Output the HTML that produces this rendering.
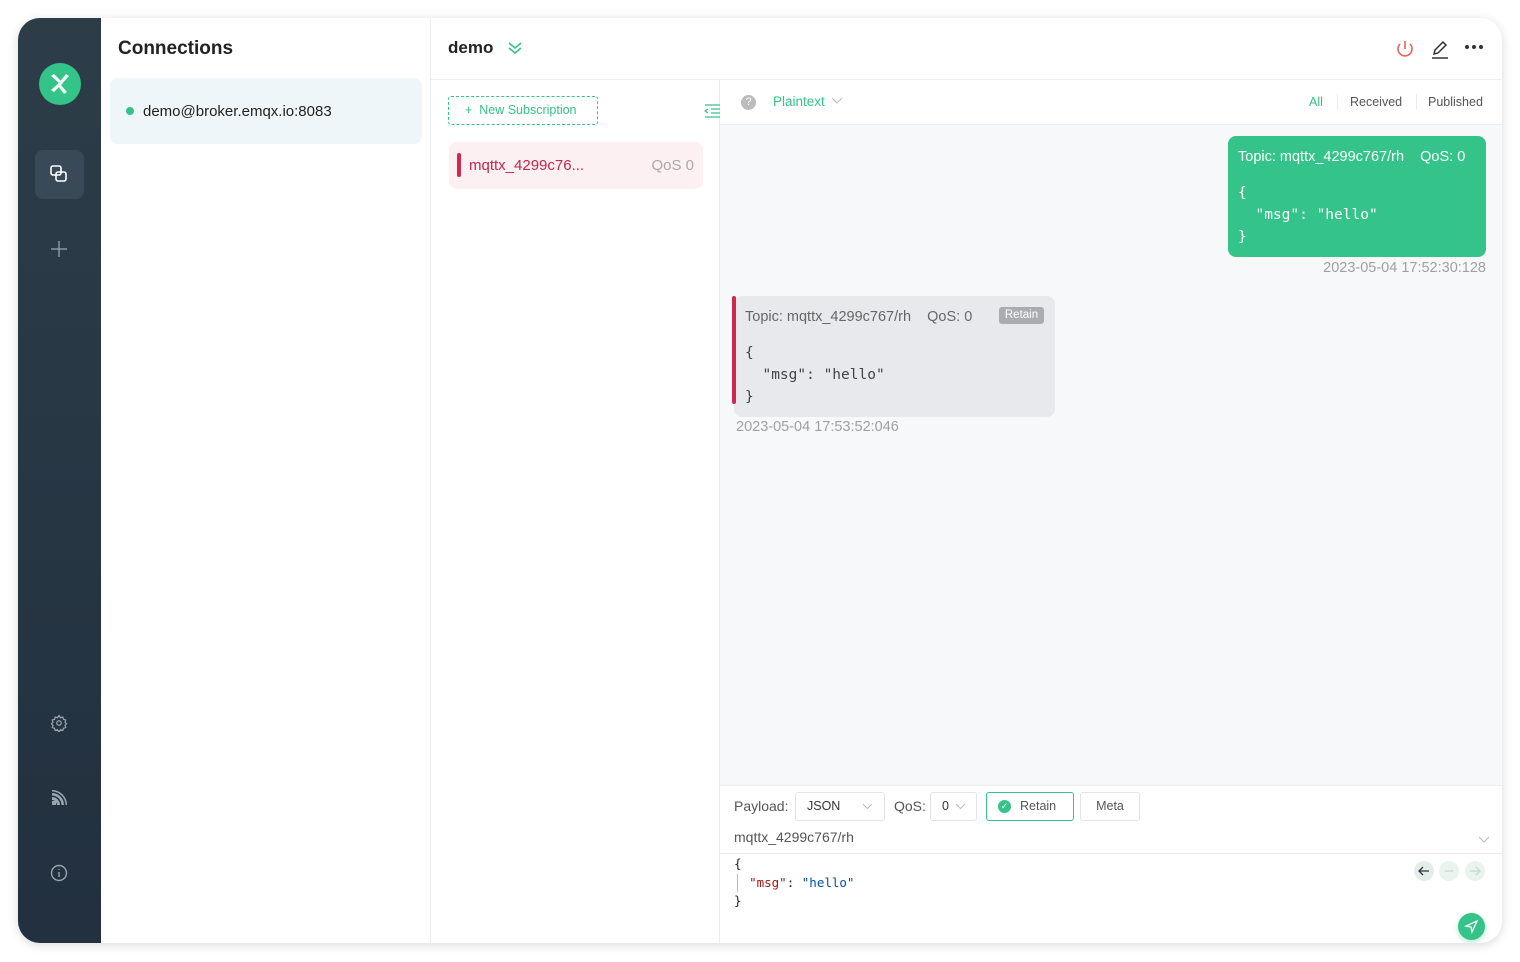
<!DOCTYPE html>
<html><head><meta charset="utf-8"><style>
*{box-sizing:border-box;margin:0;padding:0}
body{width:1520px;height:962px;background:#fff;font-family:"Liberation Sans",sans-serif;position:relative;overflow:hidden;color:#333}
.win{position:absolute;left:18px;top:18px;width:1484px;height:925px;border-radius:22px;overflow:hidden;background:#fff;box-shadow:0 2px 10px rgba(0,0,0,.15)}
.abs{position:absolute}
.side{left:0;top:0;width:83px;height:925px;background:linear-gradient(#2c3d48,#22303f)}
.mono{font-family:"DejaVu Sans Mono","Liberation Mono",monospace}
</style></head><body>
<div class="win">
 <div class="abs side">
  <div class="abs" style="left:21px;top:45px;width:42px;height:42px;border-radius:50%;background:#34c388">
   <svg width="42" height="42" viewBox="0 0 42 42"><path d="M12 13 L20 20 L12 27 L15 29 L24 20 L15 11Z" fill="#fff"/><path d="M30 13 L22 22 L28 29 L25 31 L18 22 L27 11Z" fill="#e8f8f0"/></svg>
  </div>
  <div class="abs" style="left:17px;top:132px;width:49px;height:49px;border-radius:8px;background:#384957"></div>
  <svg class="abs" style="left:31px;top:146px" width="20" height="20" viewBox="0 0 20 20" fill="none" stroke="#fff" stroke-width="1.6"><rect x="2" y="2" width="10" height="9" rx="2"/><rect x="7" y="8" width="10" height="9" rx="2"/></svg>
  <svg class="abs" style="left:32px;top:222px" width="18" height="18" stroke="#8c98a3" stroke-width="1.5"><path d="M9 1V17M1 9H17"/></svg>
  <svg class="abs" style="left:32px;top:696px" width="18" height="18" viewBox="0 0 24 24" fill="none" stroke="#9aa5af" stroke-width="1.6"><circle cx="12" cy="12" r="3"/><path d="M12 2l2 3 3-1 1 3 3 1-1 3 2 2-2 2 1 3-3 1-1 3-3-1-2 3-2-3-3 1-1-3-3-1 1-3-2-2 2-2-1-3 3-1 1-3 3 1z"/></svg>
  <svg class="abs" style="left:33px;top:771px" width="17" height="17" viewBox="0 0 17 17" fill="#9aa5af"><path d="M1 8a8 8 0 0 1 8 8H6a5 5 0 0 0-5-5z"/><path d="M1 4a12 12 0 0 1 12 12h-2.5A9.5 9.5 0 0 0 1 6.5z"/><path d="M1 1a15 15 0 0 1 15 15h-1.5A13.5 13.5 0 0 0 1 2.5z"/><rect x="1" y="12" width="4" height="4"/></svg>
  <svg class="abs" style="left:32px;top:846px" width="18" height="18" viewBox="0 0 18 18" fill="none" stroke="#9aa5af" stroke-width="1.4"><circle cx="9" cy="9" r="7.5"/><path d="M9 8v5M9 5v1"/></svg>
 </div>
 <div class="abs" style="left:83px;top:0;width:330px;height:925px;background:#fff;border-right:1px solid #eceef0">
  <div class="abs" style="left:17px;top:20px;font-size:19px;font-weight:bold;color:#222">Connections</div>
  <div class="abs" style="left:9px;top:60px;width:312px;height:66px;border-radius:8px;background:#eff6fa">
   <div class="abs" style="left:16px;top:29px;width:8px;height:8px;border-radius:50%;background:#34c388"></div>
   <div class="abs" style="left:33px;top:25px;font-size:15px;color:#222">demo@broker.emqx.io:8083</div>
  </div>
 </div>
 <div class="abs" style="left:413px;top:0;width:1071px;height:62px;border-bottom:1px solid #eceef0">
  <div class="abs" style="left:17px;top:20px;font-size:17px;font-weight:bold;color:#222">demo</div>
  <svg class="abs" style="left:76px;top:22px" width="16" height="16" fill="none" stroke="#34c388" stroke-width="1.6"><path d="M2 3l6 5 6-5M2 8l6 5 6-5"/></svg>
  <svg class="abs" style="left:963px;top:20px" width="22" height="22" fill="none" stroke="#e86060" stroke-width="1.6"><path d="M11 3v8"/><path d="M6 6a7 7 0 1 0 10 0"/></svg>
  <svg class="abs" style="left:998px;top:20px" width="22" height="22" fill="none" stroke="#333" stroke-width="1.5"><path d="M5 16l1-4 8-8 3 3-8 8z M3 20h16"/></svg>
  <svg class="abs" style="left:1033px;top:26px" width="20" height="6" fill="#333"><circle cx="3" cy="3" r="2"/><circle cx="10" cy="3" r="2"/><circle cx="17" cy="3" r="2"/></svg>
 </div>
 <div class="abs" style="left:413px;top:62px;width:289px;height:863px;border-right:1px solid #eceef0">
  <div class="abs" style="left:17px;top:16px;width:150px;height:29px;border:1px dashed #34c388;border-radius:3px;color:#34c388;font-size:12.5px;line-height:27px;padding-left:16px">+&nbsp;&nbsp;New Subscription</div>
  <svg class="abs" style="left:273px;top:24px" width="16" height="14" fill="none" stroke="#34c388" stroke-width="1.2"><path d="M1 1h15M7 5h9M7 9h9M1 13h15M4 5l-3 2 3 2"/></svg>
  <div class="abs" style="left:18px;top:62px;width:254px;height:47px;border-radius:8px;background:#fdf0f2">
   <div class="abs" style="left:8px;top:11px;width:4px;height:24px;border-radius:2px;background:#d0284f"></div>
   <div class="abs" style="left:20px;top:15px;font-size:15px;color:#c3264a">mqttx_4299c76...</div>
   <div class="abs" style="right:9px;top:15px;font-size:15px;color:#a8a8a8">QoS 0</div>
  </div>
 </div>
 <div class="abs" style="left:702px;top:62px;width:782px;height:863px;background:#f7f8fa">
  <div class="abs" style="left:0;top:0;width:782px;height:45px;background:#fff;border-bottom:1px solid #eceef0">
   <div class="abs" style="left:21px;top:15px;width:15px;height:15px;border-radius:50%;background:#bcbcbc;color:#fff;font-size:11px;text-align:center;line-height:15px">?</div>
   <div class="abs" style="left:53px;top:14px;font-size:13.5px;color:#34c388">Plaintext</div>
   <svg class="abs" style="left:111px;top:17px" width="12" height="8" fill="none" stroke="#bbb"><path d="M1 1l5 5 5-5"/></svg>
   <div class="abs" style="left:589px;top:15px;font-size:12.5px;color:#34c388">All</div>
   <div class="abs" style="left:617px;top:14px;width:1px;height:16px;background:#eee"></div>
   <div class="abs" style="left:630px;top:15px;font-size:12.5px;color:#555">Received</div>
   <div class="abs" style="left:696px;top:14px;width:1px;height:16px;background:#eee"></div>
   <div class="abs" style="left:708px;top:15px;font-size:12.5px;color:#555">Published</div>
  </div>
  <div class="abs" style="left:508px;top:56px;width:258px;height:121px;border-radius:8px;background:#34c388;color:#fff">
   <div class="abs" style="left:10px;top:13px;font-size:14.5px">Topic: mqttx_4299c767/rh&nbsp;&nbsp;&nbsp;&nbsp;QoS: 0</div>
   <pre class="abs mono" style="left:10px;top:46px;font-size:14.5px;line-height:22px">{
  "msg": "hello"
}</pre>
  </div>
  <div class="abs" style="right:16px;top:180px;font-size:14.5px;color:#a0a0a0">2023-05-04 17:52:30:128</div>
  <div class="abs" style="left:14px;top:216px;width:321px;height:121px;border-radius:8px;background:#e8e9ec">
   <div class="abs" style="left:-2px;top:0;width:4px;height:108px;background:#d0284f;border-radius:2px"></div>
   <div class="abs" style="left:11px;top:13px;font-size:14.5px;color:#666">Topic: mqttx_4299c767/rh&nbsp;&nbsp;&nbsp;&nbsp;QoS: 0</div>
   <div class="abs" style="left:265px;top:11px;width:45px;height:17px;border-radius:3px;background:#a9acb0;color:#fff;font-size:11.5px;text-align:center;line-height:17px">Retain</div>
   <pre class="abs mono" style="left:11px;top:46px;font-size:14.5px;line-height:22px;color:#444">{
  "msg": "hello"
}</pre>
  </div>
  <div class="abs" style="left:16px;top:339px;font-size:14.5px;color:#a0a0a0">2023-05-04 17:53:52:046</div>
  <div class="abs" style="left:0;top:705px;width:782px;height:158px;background:#fff;border-top:1px solid #eceef0">
   <div class="abs" style="left:14px;top:12px;font-size:14px;color:#555">Payload:</div>
   <div class="abs" style="left:75px;top:6px;width:90px;height:29px;border:1px solid #e4e4e4;border-radius:3px;font-size:12.5px;color:#333;line-height:27px;padding-left:11px">JSON<svg class="abs" style="left:66px;top:10px" width="11" height="7" fill="none" stroke="#bbb"><path d="M1 1l4.5 4.5L10 1"/></svg></div>
   <div class="abs" style="left:174px;top:12px;font-size:14px;color:#555">QoS:</div>
   <div class="abs" style="left:210px;top:6px;width:47px;height:29px;border:1px solid #e4e4e4;border-radius:3px;font-size:12.5px;color:#333;line-height:27px;padding-left:11px">0<svg class="abs" style="left:24px;top:10px" width="11" height="7" fill="none" stroke="#bbb"><path d="M1 1l4.5 4.5L10 1"/></svg></div>
   <div class="abs" style="left:266px;top:6px;width:88px;height:29px;border:1.5px solid #34c388;border-radius:3px;font-size:12.5px;color:#555;line-height:26px;padding-left:33px">Retain<div class="abs" style="left:11px;top:7px;width:13px;height:13px;border-radius:50%;background:#34c388;color:#fff;font-size:9px;line-height:13px;text-align:center;padding:0">✓</div></div>
   <div class="abs" style="left:360px;top:6px;width:60px;height:29px;border:1px solid #e4e4e4;border-radius:3px;font-size:12.5px;color:#555;line-height:27px;text-align:center">Meta</div>
   <div class="abs" style="left:14px;top:43px;font-size:14px;color:#555">mqttx_4299c767/rh</div>
   <svg class="abs" style="left:758px;top:50px" width="12" height="8" fill="none" stroke="#bbb"><path d="M1 1l5 5 5-5"/></svg>
   <div class="abs" style="left:0;top:67px;width:782px;height:1px;background:#eceef0"></div>
   <pre class="abs mono" style="left:14px;top:69px;font-size:12.5px;line-height:18.5px;color:#222">{
  <span style="color:#a31515">"msg"</span>: <span style="color:#0451a5">"hello"</span>
}</pre>
   <div class="abs" style="left:17px;top:88px;width:1px;height:18px;background:#bbb"></div>
   <div class="abs" style="left:694px;top:75px;width:20px;height:20px;border-radius:50%;background:#e2efe9"><svg width="20" height="20" fill="none" stroke="#334" stroke-width="1.3"><path d="M15 10H5M9 6l-4 4 4 4"/></svg></div>
   <div class="abs" style="left:719px;top:75px;width:20px;height:20px;border-radius:50%;background:#eaf4ef"><svg width="20" height="20" stroke="#c8d8d0" stroke-width="1.3"><path d="M6 10h8"/></svg></div>
   <div class="abs" style="left:745px;top:75px;width:20px;height:20px;border-radius:50%;background:#eaf4ef"><svg width="20" height="20" fill="none" stroke="#c8d8d0" stroke-width="1.3"><path d="M5 10h10M11 6l4 4-4 4"/></svg></div>
   <div class="abs" style="left:738px;top:127px;width:27px;height:27px;border-radius:50%;background:#34c388;box-shadow:0 2px 6px rgba(52,195,136,.4)"><svg width="27" height="27" fill="none" stroke="#fff" stroke-width="1.3"><path d="M19 8L8 13l5 1 1 5z"/></svg></div>
  </div>
 </div>
</div>
</body></html>
